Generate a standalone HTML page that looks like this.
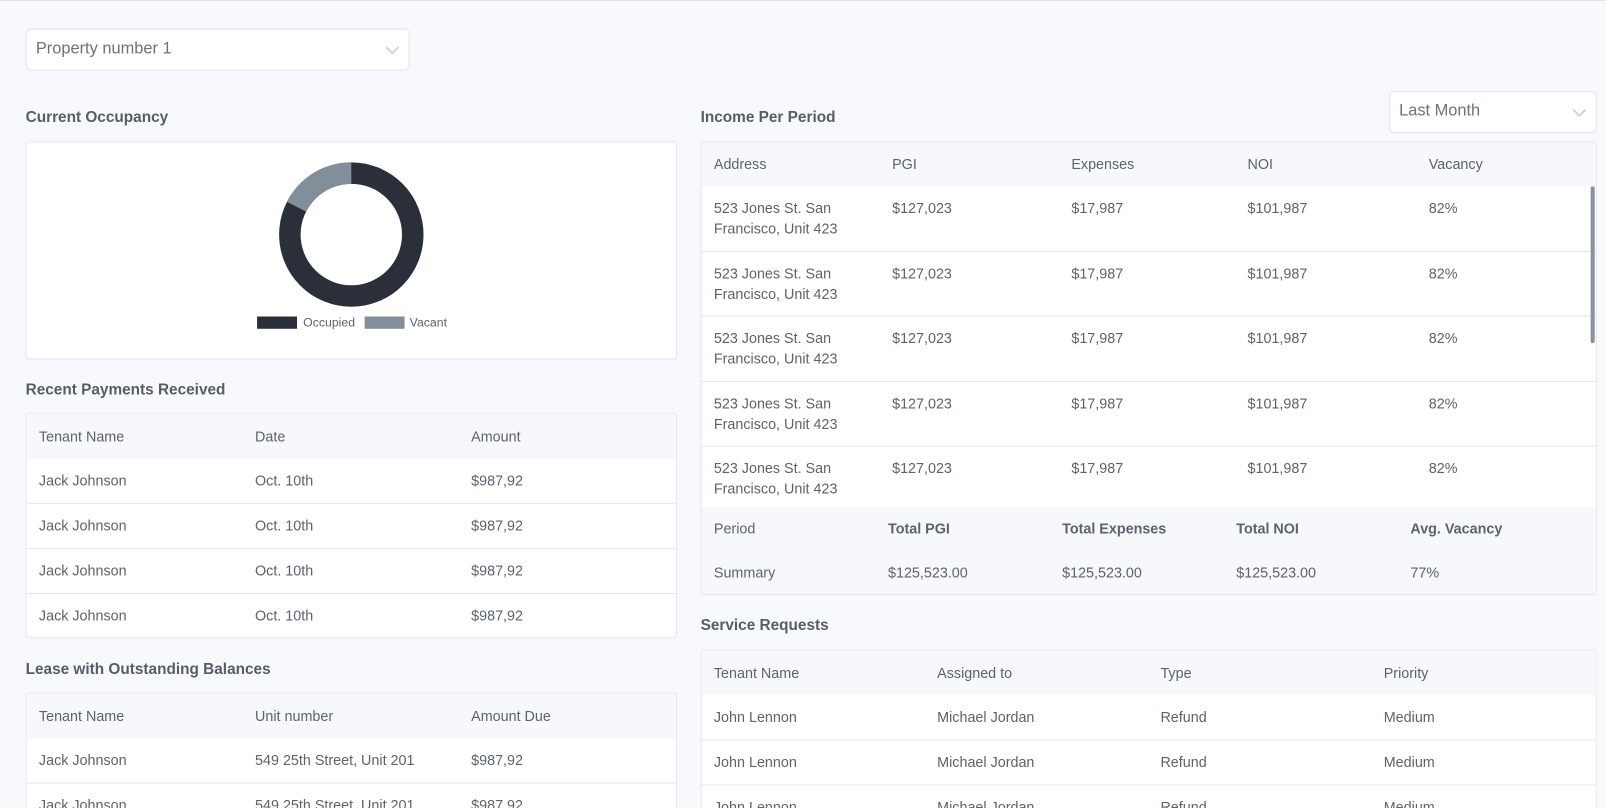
<!DOCTYPE html>
<html><head><meta charset="utf-8"><style>
*{box-sizing:border-box;margin:0;padding:0}
html,body{width:1606px;height:808px;overflow:hidden;background:#f8f9fd}
#w{position:absolute;left:0;top:0;width:1568px;height:789px;overflow:hidden;transform:scale(1.02423);transform-origin:0 0;font-family:"Liberation Sans",sans-serif;color:#5b6270;font-size:14px}
.a{position:absolute}
.h{position:absolute;font-weight:bold;font-size:15px;color:#555d6a}
.card{position:absolute;background:#fff;border:1px solid #e3e6ee;border-radius:3px;overflow:hidden}
.cut{border-bottom:none;border-radius:3px 3px 0 0}
.sel{position:absolute;background:#fff;border:1px solid #e1e4ec;border-radius:5px;font-size:16px;color:#6a7180}
.row{position:absolute;left:0;right:0;border-bottom:1px solid #e3e6ee}
.hd{background:#f7f8fc;border-bottom:none}
.t{position:absolute;line-height:20px}
.b{font-weight:bold}
</style></head><body><div id="w">
<div class="a" style="left:0;top:0;width:1568px;height:1px;background:#e3e6ee"></div>

<div class="sel" style="left:25px;top:28px;width:375px;height:41px"><span class="t" style="left:9px;top:9px">Property number 1</span>
<svg class="a" style="left:350px;top:15px" width="14" height="10"><path d="M1 2l6 6 6-6" fill="none" stroke="#c5c9d2" stroke-width="1.5"/></svg></div>

<div class="h" style="left:25px;top:106px">Current Occupancy</div>
<div class="card" style="left:25px;top:138px;width:636px;height:213px">
<svg class="a" style="left:0;top:0" width="636" height="213">
<circle cx="317" cy="90" r="60" fill="none" stroke="#2b2f39" stroke-width="21"/>
<circle cx="317" cy="90" r="60" fill="none" stroke="#808f99" stroke-width="21" stroke-dasharray="66 400" transform="rotate(-90 317 90) scale(1,-1) translate(0,-180)"/>
<rect x="225" y="170" width="39" height="12" fill="#2b2f39"/>
<text x="270" y="180" font-family="Liberation Sans" font-size="12" fill="#5b6270">Occupied</text>
<rect x="330" y="170" width="39" height="12" fill="#808f99"/>
<text x="374" y="180" font-family="Liberation Sans" font-size="12" fill="#5b6270">Vacant</text>
</svg></div>

<div class="h" style="left:25px;top:372px">Recent Payments Received</div>
<div class="card" style="left:25px;top:403px;width:636px;height:220px">
<div class="row hd" style="top:0;height:44px"><span class="t" style="left:12px;top:12px">Tenant Name</span><span class="t" style="left:223px;top:12px">Date</span><span class="t" style="left:434px;top:12px">Amount</span></div>
<div class="row" style="top:44px;height:44px"><span class="t" style="left:12px;top:11px">Jack Johnson</span><span class="t" style="left:223px;top:11px">Oct. 10th</span><span class="t" style="left:434px;top:11px">$987,92</span></div>
<div class="row" style="top:88px;height:44px"><span class="t" style="left:12px;top:11px">Jack Johnson</span><span class="t" style="left:223px;top:11px">Oct. 10th</span><span class="t" style="left:434px;top:11px">$987,92</span></div>
<div class="row" style="top:132px;height:44px"><span class="t" style="left:12px;top:11px">Jack Johnson</span><span class="t" style="left:223px;top:11px">Oct. 10th</span><span class="t" style="left:434px;top:11px">$987,92</span></div>
<div class="row" style="top:176px;height:44px;border:none"><span class="t" style="left:12px;top:11px">Jack Johnson</span><span class="t" style="left:223px;top:11px">Oct. 10th</span><span class="t" style="left:434px;top:11px">$987,92</span></div>
</div>

<div class="h" style="left:25px;top:645px">Lease with Outstanding Balances</div>
<div class="card cut" style="left:25px;top:676px;width:636px;height:120px">
<div class="row hd" style="top:0;height:44px"><span class="t" style="left:12px;top:12px">Tenant Name</span><span class="t" style="left:223px;top:12px">Unit number</span><span class="t" style="left:434px;top:12px">Amount Due</span></div>
<div class="row" style="top:44px;height:44px"><span class="t" style="left:12px;top:11px">Jack Johnson</span><span class="t" style="left:223px;top:11px">549 25th Street, Unit 201</span><span class="t" style="left:434px;top:11px">$987,92</span></div>
<div class="row" style="top:88px;height:44px"><span class="t" style="left:12px;top:11px">Jack Johnson</span><span class="t" style="left:223px;top:11px">549 25th Street, Unit 201</span><span class="t" style="left:434px;top:11px">$987,92</span></div>
</div>

<div class="h" style="left:684px;top:106px">Income Per Period</div>
<div class="sel" style="left:1356px;top:89px;width:203px;height:41px"><span class="t" style="left:9px;top:9px">Last Month</span>
<svg class="a" style="left:178px;top:15px" width="14" height="10"><path d="M1 2l6 6 6-6" fill="none" stroke="#c5c9d2" stroke-width="1.5"/></svg></div>
<div class="card" style="left:684px;top:138px;width:875px;height:443px">
<div class="row hd" style="top:0;height:43px"><span class="t" style="left:12px;top:11px">Address</span><span class="t" style="left:186px;top:11px">PGI</span><span class="t" style="left:361px;top:11px">Expenses</span><span class="t" style="left:533px;top:11px">NOI</span><span class="t" style="left:710px;top:11px">Vacancy</span></div>
<div class="row" style="top:43px;height:64px"><span class="t" style="left:12px;top:11px">523 Jones St. San<br>Francisco, Unit 423</span><span class="t" style="left:186px;top:11px">$127,023</span><span class="t" style="left:361px;top:11px">$17,987</span><span class="t" style="left:533px;top:11px">$101,987</span><span class="t" style="left:710px;top:11px">82%</span></div>
<div class="row" style="top:107px;height:63px"><span class="t" style="left:12px;top:11px">523 Jones St. San<br>Francisco, Unit 423</span><span class="t" style="left:186px;top:11px">$127,023</span><span class="t" style="left:361px;top:11px">$17,987</span><span class="t" style="left:533px;top:11px">$101,987</span><span class="t" style="left:710px;top:11px">82%</span></div>
<div class="row" style="top:170px;height:64px"><span class="t" style="left:12px;top:11px">523 Jones St. San<br>Francisco, Unit 423</span><span class="t" style="left:186px;top:11px">$127,023</span><span class="t" style="left:361px;top:11px">$17,987</span><span class="t" style="left:533px;top:11px">$101,987</span><span class="t" style="left:710px;top:11px">82%</span></div>
<div class="row" style="top:234px;height:63px"><span class="t" style="left:12px;top:11px">523 Jones St. San<br>Francisco, Unit 423</span><span class="t" style="left:186px;top:11px">$127,023</span><span class="t" style="left:361px;top:11px">$17,987</span><span class="t" style="left:533px;top:11px">$101,987</span><span class="t" style="left:710px;top:11px">82%</span></div>
<div class="row" style="top:297px;height:60px;border:none"><span class="t" style="left:12px;top:11px">523 Jones St. San<br>Francisco, Unit 423</span><span class="t" style="left:186px;top:11px">$127,023</span><span class="t" style="left:361px;top:11px">$17,987</span><span class="t" style="left:533px;top:11px">$101,987</span><span class="t" style="left:710px;top:11px">82%</span></div>
<div class="a" style="left:868px;top:43px;width:4px;height:153px;background:#8893a0;border-radius:2px"></div>
<div class="row hd" style="top:356px;height:87px">
<span class="t" style="left:12px;top:11px">Period</span><span class="t b" style="left:182px;top:11px">Total PGI</span><span class="t b" style="left:352px;top:11px">Total Expenses</span><span class="t b" style="left:522px;top:11px">Total NOI</span><span class="t b" style="left:692px;top:11px">Avg. Vacancy</span>
<span class="t" style="left:12px;top:54px">Summary</span><span class="t" style="left:182px;top:54px">$125,523.00</span><span class="t" style="left:352px;top:54px">$125,523.00</span><span class="t" style="left:522px;top:54px">$125,523.00</span><span class="t" style="left:692px;top:54px">77%</span></div>
</div>

<div class="h" style="left:684px;top:602px">Service Requests</div>
<div class="card cut" style="left:684px;top:634px;width:875px;height:160px">
<div class="row hd" style="top:0;height:44px"><span class="t" style="left:12px;top:12px">Tenant Name</span><span class="t" style="left:230px;top:12px">Assigned to</span><span class="t" style="left:448px;top:12px">Type</span><span class="t" style="left:666px;top:12px">Priority</span></div>
<div class="row" style="top:44px;height:44px"><span class="t" style="left:12px;top:11px">John Lennon</span><span class="t" style="left:230px;top:11px">Michael Jordan</span><span class="t" style="left:448px;top:11px">Refund</span><span class="t" style="left:666px;top:11px">Medium</span></div>
<div class="row" style="top:88px;height:44px"><span class="t" style="left:12px;top:11px">John Lennon</span><span class="t" style="left:230px;top:11px">Michael Jordan</span><span class="t" style="left:448px;top:11px">Refund</span><span class="t" style="left:666px;top:11px">Medium</span></div>
<div class="row" style="top:132px;height:44px"><span class="t" style="left:12px;top:11px">John Lennon</span><span class="t" style="left:230px;top:11px">Michael Jordan</span><span class="t" style="left:448px;top:11px">Refund</span><span class="t" style="left:666px;top:11px">Medium</span></div>
</div>
</div></body></html>
